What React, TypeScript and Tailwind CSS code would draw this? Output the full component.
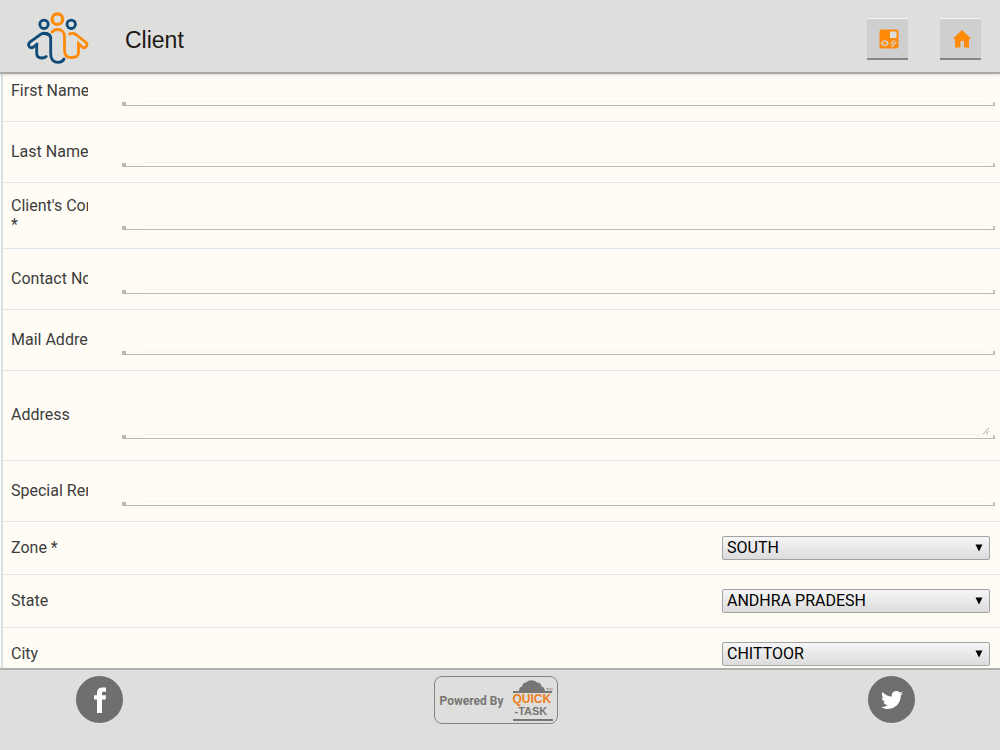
import React from "react";
import { FaTwitter } from "react-icons/fa";

function TeamLogo() {
  return (
    <svg viewBox="0 0 62 52" className="h-[52px] w-[62px]" fill="none" strokeWidth="2.800" strokeLinecap="round" role="img" aria-label="Team logo">
      <g stroke="#0f4a78">
        <circle cx="17" cy="12.300" r="4.200" />
        <circle cx="44.200" cy="12.300" r="4.200" />
        <path d="M22.500 23c-2-2-5.500-2.200-8-1.200L3.500 29.500C-.5 33 3 37.500 6.500 35L10 32M9.700 32.500V41c0 3.500 2 5 5 5 2 0 3.500-.5 4.500-1.500" />
        <path d="M16 21.500c5 0 7.700 1.500 7.700 5V42c0 5.500 3 8.300 7.300 8.300 3 0 5-1.300 6-3.300" />
      </g>
      <g stroke="#ff8a08">
        <circle cx="30.400" cy="7.200" r="5.300" strokeWidth="3.200" />
        <path d="M25 20c1.300-1.500 3.200-2.500 5.500-2.500 4.500 0 7 3 7 7V38c0 5 2 7.500 6 7.500h1.500c4 0 6.500-1.500 6.500-5V31.500l3.500 3.300c3 2.500 6.500-1.500 4-4.300L49 22.500c-2-1.400-4.500-1.400-6.500-.5" />
      </g>
    </svg>
  );
}

function BoardIcon() {
  return (
    <svg viewBox="0 0 20 20" className="size-5" fill="none" aria-hidden="true">
      <rect x=".5" y=".5" width="19" height="19" rx="2" fill="#ff8a08" />
      <path d="M11 2.500h6.500v6.500H11z" fill="#dededc" />
      <path d="M5.800 10.500l1.200 1.300 1.800.2.200 1.200 1 1-1 1-.2 1.200-1.800.3-1.200 1-1.200-1-1.800-.3-.2-1.200-1-1 1-1 .2-1.200 1.800-.2z" fill="#d9cbb8" />
      <circle cx="5.800" cy="14.200" r="1.600" fill="#ff8a08" />
      <path d="M11.500 15.200l3.800-3.800M12.500 17.800l5-5" stroke="#d9cbb8" strokeWidth="1.500" />
    </svg>
  );
}

function HomeIcon() {
  return (
    <svg viewBox="0 0 20 20" className="size-5" fill="#ff8a08" aria-hidden="true">
      <path d="M10 1 19.300 10h-2.300v8.500H12V12H8.500v6.500H3V10H.7z" />
    </svg>
  );
}

function FacebookIcon() {
  return (
    <svg viewBox="0 0 12 26" className="h-[26px] w-3" fill="currentColor" aria-hidden="true">
      <path d="M3 26V12.500H0V8.200h3V6.500C3 2.500 5 .5 8.500.5H12v4.300H9.500C8.500 4.800 8 5.300 8 6.300v1.900h4l-.4 4.300H8V26z" />
    </svg>
  );
}

function HeaderButton({ label, children }: { label: string; children: React.ReactNode }) {
  return (
    <button
      type="button"
      aria-label={label}
      className="flex h-[42px] w-[41px] items-center justify-center border-t border-b-2 border-t-[#f5f5f4] border-b-[#858587] bg-[#cfcfcf] pt-px pl-0.5"
    >
      {children}
    </button>
  );
}

type FieldProps = { id: string; label: string; required?: boolean; multiline?: boolean };

function Field({ id, label, required, multiline }: FieldProps) {
  return (
    <div className={`flex items-center border-b border-[#dbe4e9] pr-[5px] pl-2 ${multiline ? "h-[90px]" : required ? "h-[66px]" : "h-[61px]"}`}>
      <label htmlFor={id} className="w-[77px] shrink-0 overflow-hidden pb-0.5 whitespace-nowrap">
        {label}
        {required && <span className="block">*</span>}
      </label>
      <div className="relative ml-[34px] flex flex-1 border-b border-[#bcbab6]">
        {multiline ? (
          <textarea id={id} className="h-[46px] w-full resize-none bg-transparent px-1 outline-none" />
        ) : (
          <input id={id} type="text" className="h-7 w-full bg-transparent px-1 outline-none" />
        )}
        <span className="absolute right-1.5 bottom-[3px] left-[22px] h-px bg-[#f7f4ee]" />
        <span className="absolute -bottom-px left-0 size-1 bg-[#b9b7b2]" />
        <span className="absolute right-0 bottom-0 h-[3px] w-0.5 bg-[#c3c1bd]" />
        {multiline && (
          <svg viewBox="0 0 6 6" className="absolute right-1.5 bottom-1 size-1.5" stroke="#aaa8a4" aria-hidden="true">
            <path d="M0 6 6 0M3 6l3-3" />
          </svg>
        )}
      </div>
    </div>
  );
}

function Choice({ id, label, value }: { id: string; label: string; value: string }) {
  return (
    <div className="flex h-[53px] items-center justify-between border-b border-[#dbe4e9] pr-2.5 pl-2">
      <label htmlFor={id} className="pb-0.5">{label}</label>
      <div className="relative w-[268px] text-black">
        <select
          id={id}
          className="block h-6 w-full appearance-none rounded-xs border border-[#a3a3a3] bg-linear-to-b from-[#f6f6f6] to-[#dcdcdc] pl-1 leading-5 outline-none"
        >
          <option>{value}</option>
        </select>
        <svg viewBox="0 0 8 8" className="pointer-events-none absolute top-2 right-[7px] size-2" aria-hidden="true">
          <path d="M.5 .5h7L4 7.500z" />
        </svg>
      </div>
    </div>
  );
}

const fields: FieldProps[] = [
  { id: "first", label: "First Name" },
  { id: "last", label: "Last Name" },
  { id: "company", label: "Client's Company", required: true },
  { id: "contact", label: "Contact No" },
  { id: "mail", label: "Mail Address" },
  { id: "address", label: "Address", multiline: true },
  { id: "remarks", label: "Special Remarks" },
];

const choices = [
  { id: "zone", label: "Zone *", value: "SOUTH" },
  { id: "state", label: "State", value: "ANDHRA PRADESH" },
  { id: "city", label: "City", value: "CHITTOOR" },
];

export default function App() {
  return (
    <div className="flex h-screen flex-col bg-[#fffcf5] font-[Roboto,sans-serif] text-base leading-[19px] text-[#3d3d3d]">
      <header className="z-10 flex h-[74px] shrink-0 items-center border-b-2 border-[#a9a9a7] bg-[#dededc] pr-[19px] pl-[27px] shadow-sm">
        <div className="pt-1"><TeamLogo /></div>
        <h1 className="ml-9 pt-2 font-['Liberation_Sans',sans-serif] text-[23px] leading-7 text-[#1c1816]">Client</h1>
        <div className="ml-auto flex gap-8 pt-1.5">
          <HeaderButton label="Board"><BoardIcon /></HeaderButton>
          <HeaderButton label="Home"><HomeIcon /></HeaderButton>
        </div>
      </header>
      <main className="min-h-0 flex-1 overflow-hidden pl-px">
        <form className="-mt-[13px] border-l-2 border-[#d5e2e8]">
          {fields.map((f) => <Field key={f.id} {...f} />)}
          {choices.map((c) => <Choice key={c.id} {...c} />)}
        </form>
      </main>
      <footer className="flex h-[82px] shrink-0 items-start justify-between border-t-2 border-[#b1b1af] bg-[#dededc] pt-1.5 pr-[85px] pl-[76px]">
        <a href="#facebook" aria-label="Facebook" className="flex size-[47px] items-center justify-center rounded-full bg-[#706f6d] text-white">
          <FacebookIcon />
        </a>
        <a href="#quick-task" className="flex h-12 w-[124px] items-center justify-between rounded-lg border border-[#858583] pr-1 pl-[5px] font-['Liberation_Sans',sans-serif] font-bold text-[#777674]">
          <span className="pt-0.5 font-[Roboto,sans-serif] text-xs whitespace-nowrap">Powered By</span>
          <span className="flex w-10 flex-col">
            <svg viewBox="0 0 40 13" className="h-[13px] w-10" fill="#777674" aria-hidden="true">
              <path d="M0 11h6c0-2.500 1-4 3-4.500C9.500 3.500 11 2.500 13 2.500 16-.5 21-.5 24 2.500c3 0 4.500 2 4.500 4 2.500.5 3 2 3.500 4.500h7v2H0z" />
              <path d="M33.500 8.500h2.500M34.700 8.500v2M37 10.500v-2l1 1 1-1v2" fill="none" stroke="#777674" strokeWidth=".6" />
            </svg>
            <span className="text-xs leading-3 text-[#ef7d1a]">QUICK</span>
            <span className="border-b-2 pb-0.5 pl-0.5 text-[11px] leading-3">-TASK</span>
          </span>
        </a>
        <a href="#twitter" aria-label="Twitter" className="flex size-[47px] items-center justify-center rounded-full bg-[#706f6d] text-white">
          <FaTwitter size={22} />
        </a>
      </footer>
    </div>
  );
}
